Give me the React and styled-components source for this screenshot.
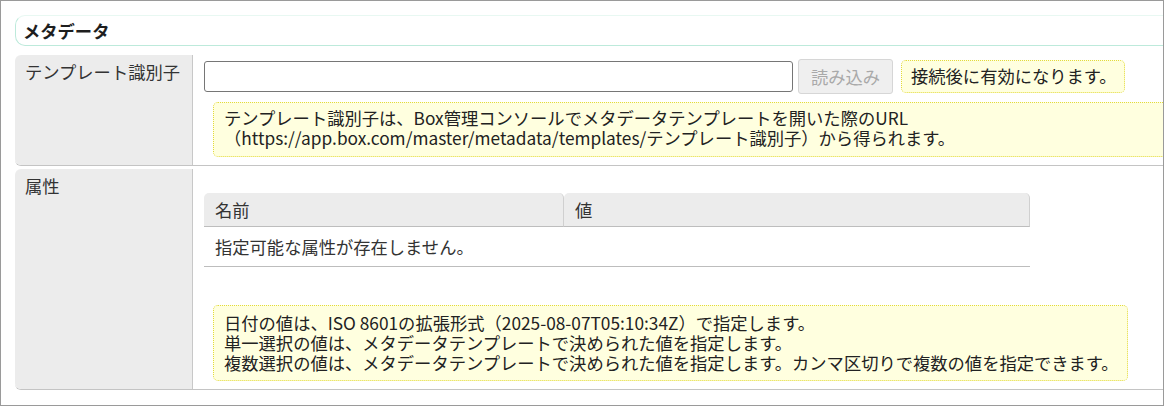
import React from 'react';
import styled, { createGlobalStyle } from 'styled-components';

const GlobalStyle = createGlobalStyle`
  body {
    margin: 0;
    background: #fff;
    color: #333;
    font-family: "Noto Sans CJK JP", "Noto Sans", sans-serif;
    font-size: 17.3px;
    line-height: 20px;
  }
`;

const Frame = styled.div`
  box-sizing: border-box;
  width: 1164px;
  height: 406px;
  border: 1px solid #9a9a9a;
  padding: 14px 0 0 14px;
  overflow: hidden;
`;

const Heading = styled.h2`
  box-sizing: border-box;
  height: 31px;
  margin: 0 0 9px;
  padding: 0 8px 0 7px;
  border: 1px solid #bdeadb;
  border-top-color: #e8f8f2;
  border-right: none;
  border-radius: 10px 0 0 10px;
  font-size: 17.3px;
  font-weight: bold;
  line-height: 29px;
  color: #1e1e1e;
`;

const Row = styled.div`
  display: flex;
  border-bottom: 1px solid #c4c4c4;
  border-bottom-left-radius: 6px;
  margin-bottom: 3px;
`;

const Label = styled.div`
  box-sizing: border-box;
  flex: 0 0 178px;
  padding: 7px 10px;
  background: #ececec;
  border-right: 1px solid #c8c8c8;
  border-radius: 6px 0 0 6px;
  color: #333;
`;

const Cell = styled.div`
  flex: 1;
  min-width: 0;
  padding: ${props => props.$pad};
`;

const Line = styled.div`
  display: flex;
  align-items: center;
`;

const TextInput = styled.input`
  box-sizing: border-box;
  width: 589px;
  height: 31px;
  margin: 0;
  border: 1px solid #767676;
  border-radius: 3px;
  background: #fff;
`;

const Button = styled.button`
  box-sizing: border-box;
  height: 35px;
  width: 95px;
  margin-left: 5px;
  border: 1px solid #d6d6d6;
  border-radius: 3px;
  background: #efefef;
  color: #a9a9a9;
  font: inherit;
`;

const Note = styled.div`
  box-sizing: border-box;
  display: ${props => (props.$block ? 'block' : 'inline-block')};
  margin-left: ${props => props.$indent || 0}px;
  margin-right: ${props => (props.$block ? -20 : 0)}px;
  margin-top: ${props => props.$top || 0}px;
  padding: ${props => props.$pad};
  background: #ffffdf;
  border: 1px dotted #e2da3c;
  border-radius: 5px;
  white-space: nowrap;
  color: #222;
`;

const NoteLine = styled.div`
  height: 20px;
`;

const Table = styled.div`
  display: grid;
  grid-template-columns: 360px 466px;
`;

const Th = styled.div`
  box-sizing: border-box;
  height: 34px;
  padding: 7px 11px 0;
  background: #ececec;
  border-right: 1px solid #d0d0d0;
  border-bottom: 1px solid #bdbdbd;
  border-radius: 5px 5px 0 0;
`;

const Td = styled.div`
  grid-column: 1 / -1;
  box-sizing: border-box;
  height: 40px;
  padding: 10px 11px 0;
  border-bottom: 1px solid #bdbdbd;
`;

const dateNotes = [
  '日付の値は、ISO 8601の拡張形式（2025-08-07T05:10:34Z）で指定します。',
  '単一選択の値は、メタデータテンプレートで決められた値を指定します。',
  '複数選択の値は、メタデータテンプレートで決められた値を指定します。カンマ区切りで複数の値を指定できます。',
];

export default function App() {
  return (
    <>
      <GlobalStyle />
      <Frame>
        <Heading>メタデータ</Heading>

        <Row>
          <Label>テンプレート識別子</Label>
          <Cell $pad="4px 0 8px 11px">
            <Line>
              <TextInput type="text" />
              <Button disabled>読み込み</Button>
              <Note $indent={8} $pad="5px 7px 6px 9px">接続後に有効になります。</Note>
            </Line>
            <Note $block $indent={9} $top={8} $pad="5px 10px 8px 10px">
              <NoteLine>テンプレート識別子は、Box管理コンソールでメタデータテンプレートを開いた際のURL</NoteLine>
              <NoteLine>（https://app.box.com/master/metadata/templates/テンプレート識別子）から得られます。</NoteLine>
            </Note>
          </Cell>
        </Row>

        <Row>
          <Label>属性</Label>
          <Cell $pad="24px 0 8px 11px">
            <Table>
              <Th>名前</Th>
              <Th>値</Th>
              <Td>指定可能な属性が存在しません。</Td>
            </Table>
            <Note $indent={9} $top={38} $pad="7px 8px 7px 10px">
              {dateNotes.map(text => (
                <NoteLine key={text}>{text}</NoteLine>
              ))}
            </Note>
          </Cell>
        </Row>
      </Frame>
    </>
  );
}
